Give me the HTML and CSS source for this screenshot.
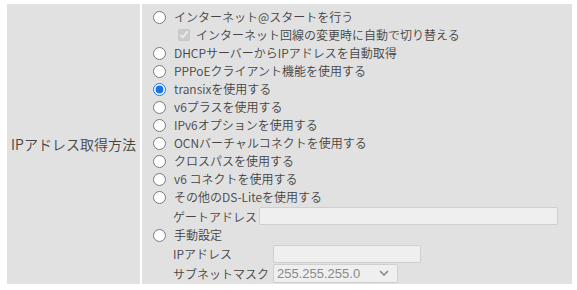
FILE: index.html
```html
<!DOCTYPE html>
<html lang="ja">
  <head>
    <meta charset="UTF-8" />
    <title>IPアドレス取得方法</title>
    <link rel="stylesheet" href="styles.css">
  </head>
  <body>
    <div class="setting">
      <div class="setting-name">IPアドレス取得方法</div>
      <div class="setting-value">
        <label class="opt"><input type="radio" name="ipmode" />インターネット@スタートを行う</label>
        <label class="opt sub-check"><input type="checkbox" checked disabled />インターネット回線の変更時に自動で切り替える</label>
        <label class="opt"><input type="radio" name="ipmode" />DHCPサーバーからIPアドレスを自動取得</label>
        <label class="opt"><input type="radio" name="ipmode" />PPPoEクライアント機能を使用する</label>
        <label class="opt"><input type="radio" name="ipmode" checked />transixを使用する</label>
        <label class="opt"><input type="radio" name="ipmode" />v6プラスを使用する</label>
        <label class="opt"><input type="radio" name="ipmode" />IPv6オプションを使用する</label>
        <label class="opt"><input type="radio" name="ipmode" />OCNバーチャルコネクトを使用する</label>
        <label class="opt"><input type="radio" name="ipmode" />クロスパスを使用する</label>
        <label class="opt"><input type="radio" name="ipmode" />v6 コネクトを使用する</label>
        <label class="opt"><input type="radio" name="ipmode" />その他のDS-Liteを使用する</label>
        <div class="field gate">
          <span class="field-label">ゲートアドレス</span>
          <input type="text" class="text-in wide" disabled />
        </div>
        <label class="opt"><input type="radio" name="ipmode" />手動設定</label>
        <div class="field">
          <span class="field-label fixed">IPアドレス</span>
          <input type="text" class="text-in short" disabled />
        </div>
        <div class="field last">
          <span class="field-label fixed">サブネットマスク</span>
          <div class="select-box">
            <span>255.255.255.0</span>
            <svg width="10" height="6" viewBox="0 0 10 6"><path d="M1 1l4 4 4-4" fill="none" stroke="#8a8a8a" stroke-width="1.6"/></svg>
          </div>
        </div>
      </div>
    </div>
  </body>
</html>
```

FILE: styles.css
```css
body {
  margin: 0;
  background: #fff;
  color: #444;
  font-family: "Noto Sans CJK JP", "Liberation Sans", sans-serif;
  font-weight: 350;
}
.setting {
  display: flex;
  gap: 2px;
  margin: 4px 5px 0 7px;
  height: 280px;
}
.setting-name {
  width: 133px;
  background: #e1e1e1;
  display: flex;
  align-items: center;
  justify-content: center;
  font-size: 14px;
}
.setting-value {
  flex: 1;
  background: #e1e1e1;
  padding: 4px 14px 0 11px;
  font-size: 12px;
}
.opt {
  display: flex;
  align-items: center;
  height: 18px;
  line-height: 18px;
  white-space: nowrap;
}
.opt input[type="radio"] {
  width: 13px;
  height: 13px;
  margin: 0 8px 0 0;
  accent-color: #1a73e8;
}
.sub-check {
  padding-left: 25px;
}
.sub-check input {
  width: 12px;
  height: 12px;
  margin: 0 6px 0 0;
}
.field {
  display: flex;
  align-items: center;
  height: 19px;
  padding-left: 20px;
}
.field.gate {
  height: 20px;
}
.field.last {
  height: 20px;
}
.field-label {
  white-space: nowrap;
  margin-right: 2px;
}
.field-label.fixed {
  width: 98px;
  margin-right: 2px;
}
.text-in {
  box-sizing: border-box;
  height: 18px;
  border: 1px solid #cfcfcf;
  border-radius: 2px;
  background: #efefef;
  padding: 0 4px;
}
.text-in.wide {
  flex: 1;
}
.text-in.short {
  width: 148px;
}
.select-box {
  box-sizing: border-box;
  display: flex;
  align-items: center;
  justify-content: space-between;
  width: 125px;
  height: 19px;
  border: 1px solid #cfcfcf;
  border-radius: 2px;
  background: #efefef;
  padding: 0 8px 0 3px;
  color: #8a8a8a;
  font-family: "Liberation Sans", sans-serif;
  font-weight: 400;
  font-size: 13px;
}
```
